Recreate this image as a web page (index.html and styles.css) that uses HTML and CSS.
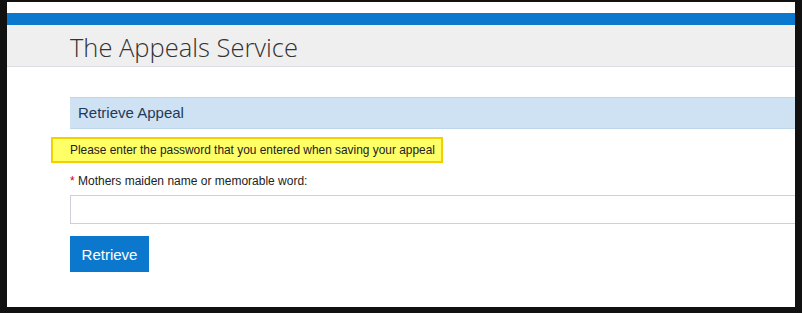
FILE: index.html
```html
<!DOCTYPE html>
<html lang="en">
<head>
  <meta charset="UTF-8" />
  <title>The Appeals Service - Retrieve Appeal</title>
  <link rel="stylesheet" href="styles.css">
</head>
<body>
  <div class="page">
    <div class="topbar"></div>
    <div class="header">
      <h1>The Appeals Service</h1>
    </div>
    <div class="content">
      <div class="panel-title">Retrieve Appeal</div>
      <div class="notice">Please enter the password that you entered when saving your appeal</div>
      <label class="field-label" for="memword"><span class="req">*</span> Mothers maiden name or memorable word:</label>
      <input type="password" id="memword" class="text-input">
      <button type="button" class="btn">Retrieve</button>
    </div>
  </div>
</body>
</html>
```

FILE: styles.css
```css
body {
  margin: 0;
  padding: 2px 7px 6px 7px;
  background-color: #111;
  font-family: "Segoe UI", "Liberation Sans", Arial, sans-serif;
  color: #222;
}
.page {
  background-color: #fff;
  height: 305px;
  overflow: hidden;
}
.topbar {
  margin-top: 11px;
  height: 12px;
  background-color: #0b78cd;
}
.header {
  height: 41px;
  background-color: #efefef;
  border-bottom: 1px solid #dddde6;
  padding-left: 63px;
}
.header h1 {
  margin: 0;
  padding-top: 7px;
  font-family: "Open Sans", sans-serif;
  font-weight: 300;
  font-size: 25.5px;
  color: #333;
  line-height: 30px;
}
.content {
  padding: 30px 0 0 63px;
}
.panel-title {
  height: 30px;
  line-height: 30px;
  background-color: #cfe2f3;
  border-top: 1px solid #bcd6ec;
  border-bottom: 1px solid #bcd6ec;
  padding-left: 8px;
  font-size: 15px;
  color: #1d3a5a;
}
.notice {
  display: inline-block;
  margin: 8px 0 0 -19px;
  padding: 0 6px 0 17px;
  height: 22px;
  line-height: 22px;
  background-color: #ffff66;
  border: 2px solid #f5d000;
  font-size: 11.9px;
  color: #222;
}
.field-label {
  display: block;
  margin-top: 11px;
  font-size: 12px;
  line-height: 15px;
  color: #222;
}
.req {
  color: #c00;
}
.text-input {
  display: block;
  box-sizing: border-box;
  width: 100%;
  height: 29px;
  margin-top: 6px;
  border: 1px solid #cdd0d6;
  border-right: none;
  padding: 0 6px;
}
.btn {
  display: block;
  margin-top: 12px;
  width: 79px;
  height: 36px;
  border: none;
  background-color: #0b78cd;
  color: #fff;
  font-family: "Segoe UI", "Liberation Sans", Arial, sans-serif;
  font-size: 15px;
  cursor: pointer;
}
```
